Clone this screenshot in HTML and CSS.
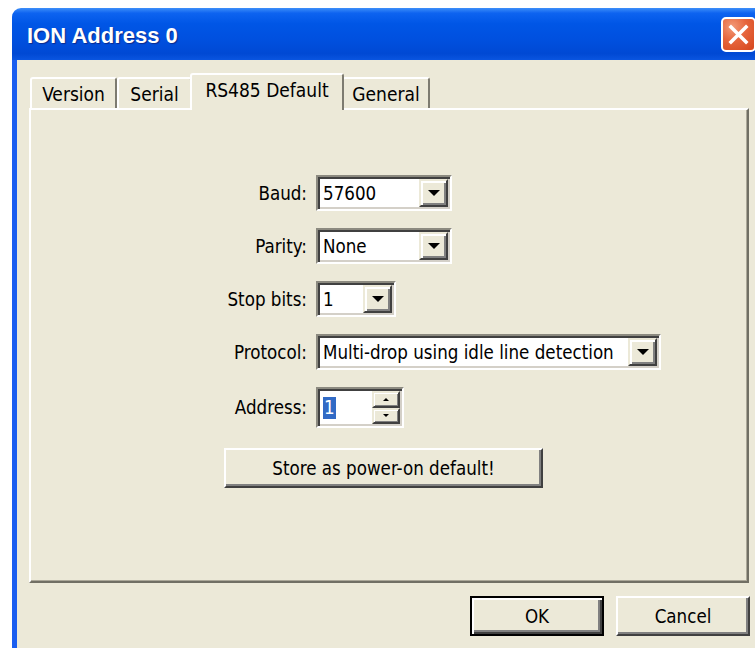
FILE: index.html
```html
<!DOCTYPE html>
<html lang="en">
<head>
<meta charset="utf-8">
<title>ION Address 0</title>
<link rel="stylesheet" href="styles.css">
</head>
<body>
<div class="window">
  <div class="titlebar">
    <span class="title">ION Address 0</span>
    <span class="close">
      <svg width="35" height="35" viewBox="0 0 35 35"><path d="M9 9 L26 26 M26 9 L9 26" stroke="#fff" stroke-width="4" stroke-linecap="square"/></svg>
    </span>
  </div>
  <div class="frame">
    <div class="tabs">
      <div class="tab tab-version">Version</div>
      <div class="tab tab-serial">Serial</div>
      <div class="tab tab-active">RS485 Default</div>
      <div class="tab tab-general">General</div>
    </div>
    <div class="panel">
      <div class="form">
        <span class="lbl">Baud:</span>
        <div class="combo w-baud"><span class="val">57600</span><span class="drop"><i class="arrow"></i></span></div>
        <span class="lbl">Parity:</span>
        <div class="combo w-baud"><span class="val">None</span><span class="drop"><i class="arrow"></i></span></div>
        <span class="lbl">Stop bits:</span>
        <div class="combo w-stop"><span class="val">1</span><span class="drop"><i class="arrow"></i></span></div>
        <span class="lbl">Protocol:</span>
        <div class="combo w-proto"><span class="val">Multi-drop using idle line detection</span><span class="drop"><i class="arrow"></i></span></div>
        <span class="lbl">Address:</span>
        <div class="combo edit w-addr"><span class="val"><span class="sel">1</span></span><span class="spin"><span class="spin-btn"><i class="arrow up"></i></span><span class="spin-btn"><i class="arrow small"></i></span></span></div>
      </div>
      <button class="btn store">Store as power-on default!</button>
    </div>
    <div class="actions">
      <button class="btn default">OK</button>
      <button class="btn">Cancel</button>
    </div>
  </div>
</div>
</body>
</html>
```
FILE: styles.css
```css
body {
  margin: 0;
  background: #fff;
  overflow: hidden;
  font-family: "DejaVu Sans Condensed", "DejaVu Sans", sans-serif;
  font-size: 18.6px;
  color: #000;
}

.window {
  margin: 8px 0 0 12px;
  width: 760px;
}

/* title bar */
.titlebar {
  height: 52px;
  box-sizing: border-box;
  border-radius: 9px 9px 0 0;
  background: linear-gradient(#3d8ef9 0%, #0d63f0 10%, #0056e6 30%, #0050df 60%, #0049d4 88%, #0a55e0 100%);
  display: flex;
  align-items: center;
  padding-left: 15px;
}

.title {
  font: bold 22px "Liberation Sans", sans-serif;
  color: #fff;
  text-shadow: 1px 1px 1px #0c2a8c;
  margin-top: 4px;
}

.close {
  margin-left: auto;
  margin-right: 16px;
  width: 35px;
  height: 35px;
  box-sizing: border-box;
  border: 2px solid #fff;
  border-radius: 5px;
  background: radial-gradient(circle at 30% 25%, #f29a78 0%, #e6653c 45%, #d5461c 100%);
  display: flex;
  align-items: center;
  justify-content: center;
}

.close svg {
  width: 31px;
  height: 31px;
}

/* dialog body */
.frame {
  background: #ece9d8;
  border-left: 5px solid #1a5ef0;
  height: 600px;
  padding: 13px 0 0 12px;
}

/* tab strip */
.tabs {
  display: flex;
  align-items: flex-end;
  height: 35px;
  padding-left: 1px;
  position: relative;
  z-index: 1;
  font-size: 19px;
}

.tab {
  height: 31px;
  box-sizing: border-box;
  border-top: 2px solid #fff;
  border-left: 2px solid #fff;
  border-right: 2px solid #7d7b70;
  border-radius: 3px 3px 0 0;
  background: #ece9d8;
  display: flex;
  align-items: center;
  justify-content: center;
}

.tab-version { width: 87px; }
.tab-serial { width: 75px; }
.tab-general { width: 88px; }

.tab-active {
  width: 154px;
  height: 37px;
  margin: 0 -2px -2px -2px;
  padding-bottom: 5px;
  position: relative;
  z-index: 2;
}

.panel {
  width: 720px;
  height: 475px;
  box-sizing: border-box;
  border: 2px solid;
  border-color: #fff #716f64 #716f64 #fff;
  box-shadow: inset -1px -1px 0 #aca899;
  background: #ece9d8;
  display: flex;
  flex-direction: column;
  align-items: flex-start;
}

/* form grid */
.form {
  display: grid;
  grid-template-columns: 110px auto;
  column-gap: 9px;
  row-gap: 17px;
  align-items: center;
  justify-items: start;
  margin: 65px 0 0 166px;
}

.lbl {
  justify-self: end;
}

.combo {
  display: flex;
  height: 36px;
  box-sizing: border-box;
  border: 2px solid;
  border-color: #8c8a80 #fff #fff #8c8a80;
  box-shadow: inset 2px 2px 0 #404040, inset -2px -2px 0 #d4d0c8;
  background: #fff;
  padding: 2px 2px 2px 3px;
}

.w-baud { width: 136px; }
.w-stop { width: 80px; }
.w-proto { width: 345px; }
.w-addr { width: 88px; height: 41px; }

.val {
  flex: 1;
  display: flex;
  align-items: center;
  padding-left: 2px;
  white-space: nowrap;
  overflow: hidden;
}

.sel {
  background: #316ac5;
  color: #fff;
  line-height: 22px;
  padding: 0 1px;
}

.drop {
  width: 29px;
  box-sizing: border-box;
  background: #ece9d8;
  border: 2px solid;
  border-color: #ece9d8 #404040 #404040 #ece9d8;
  box-shadow: inset 2px 2px 0 #fff, inset -2px -2px 0 #808080;
  display: flex;
  align-items: center;
  justify-content: center;
}

.arrow {
  width: 0;
  height: 0;
  border-left: 6px solid transparent;
  border-right: 6px solid transparent;
  border-top: 6px solid #000;
}

.arrow.small {
  border-left-width: 3px;
  border-right-width: 3px;
  border-top-width: 3px;
}

.arrow.up {
  border-left-width: 3px;
  border-right-width: 3px;
  border-top: 0;
  border-bottom: 3px solid #000;
}

.spin {
  width: 28px;
  display: flex;
  flex-direction: column;
}

.spin-btn {
  flex: 1;
  box-sizing: border-box;
  background: #ece9d8;
  border: 2px solid;
  border-color: #ece9d8 #404040 #404040 #ece9d8;
  box-shadow: inset 1px 1px 0 #fff, inset -1px -1px 0 #808080;
  display: flex;
  align-items: center;
  justify-content: center;
}

/* push buttons */
.btn {
  font: inherit;
  color: #000;
  height: 40px;
  box-sizing: border-box;
  background: #ece9d8;
  border: 2px solid;
  border-color: #fff #404040 #404040 #fff;
  box-shadow: inset -2px -2px 0 #808080;
  padding: 0;
}

.store {
  width: 319px;
  margin: 20px 0 0 193px;
}

.actions {
  display: flex;
  justify-content: flex-end;
  gap: 12px;
  width: 721px;
  margin-top: 13px;
}

.actions .btn {
  width: 134px;
}

.btn.default {
  border-color: #000;
  box-shadow: inset 2px 2px 0 #fff, inset -2px -2px 0 #404040, inset -4px -4px 0 #808080;
}
```
